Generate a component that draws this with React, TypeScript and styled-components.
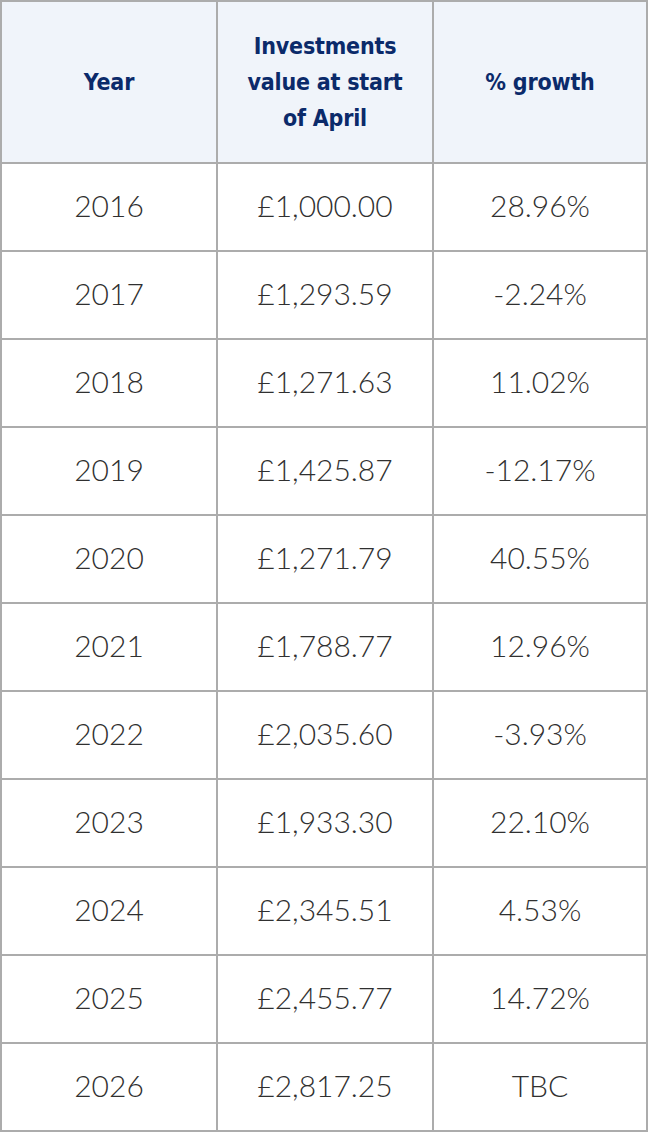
import React from 'react';
import styled, { createGlobalStyle } from 'styled-components';

const GlobalStyle = createGlobalStyle`
  html, body {
    margin: 0;
    padding: 0;
    background: #ffffff;
  }
`;

const Table = styled.table`
  width: 648px;
  table-layout: fixed;
  border-collapse: separate;
  border-spacing: 0;
  border-top: 2px solid #acacac;
  border-left: 2px solid #acacac;
`;

const HeadCell = styled.th`
  height: 160px;
  padding: 0 20px;
  background: #f0f4fa;
  border-right: 2px solid #acacac;
  border-bottom: 2px solid #acacac;
  color: #0b2a6a;
  font-family: 'DejaVu Sans Condensed', 'DejaVu Sans', sans-serif;
  font-stretch: condensed;
  font-weight: bold;
  font-size: 23px;
  letter-spacing: -0.2px;
  line-height: 36px;
  text-align: center;
  vertical-align: middle;
`;

const Cell = styled.td`
  height: 88px;
  padding: 0 0 4px;
  box-sizing: border-box;
  border-right: 2px solid #acacac;
  border-bottom: 2px solid #acacac;
  color: #303030;
  font-family: Lato, 'Noto Sans', sans-serif;
  font-weight: 300;
  font-size: 30px;
  text-align: center;
  vertical-align: middle;
`;

interface Row {
  year: number;
  value: string;
  growth: string;
}

const rows: Row[] = [
  { year: 2016, value: '£1,000.00', growth: '28.96%' },
  { year: 2017, value: '£1,293.59', growth: '-2.24%' },
  { year: 2018, value: '£1,271.63', growth: '11.02%' },
  { year: 2019, value: '£1,425.87', growth: '-12.17%' },
  { year: 2020, value: '£1,271.79', growth: '40.55%' },
  { year: 2021, value: '£1,788.77', growth: '12.96%' },
  { year: 2022, value: '£2,035.60', growth: '-3.93%' },
  { year: 2023, value: '£1,933.30', growth: '22.10%' },
  { year: 2024, value: '£2,345.51', growth: '4.53%' },
  { year: 2025, value: '£2,455.77', growth: '14.72%' },
  { year: 2026, value: '£2,817.25', growth: 'TBC' },
];

export default function App() {
  return (
    <>
      <GlobalStyle />
      <Table>
        <colgroup>
          <col style={{ width: 216 }} />
          <col style={{ width: 216 }} />
          <col style={{ width: 214 }} />
        </colgroup>
        <thead>
          <tr>
            <HeadCell>Year</HeadCell>
            <HeadCell>Investments value at start of April</HeadCell>
            <HeadCell>% growth</HeadCell>
          </tr>
        </thead>
        <tbody>
          {rows.map((r) => (
            <tr key={r.year}>
              <Cell>{r.year}</Cell>
              <Cell>{r.value}</Cell>
              <Cell>{r.growth}</Cell>
            </tr>
          ))}
        </tbody>
      </Table>
    </>
  );
}
